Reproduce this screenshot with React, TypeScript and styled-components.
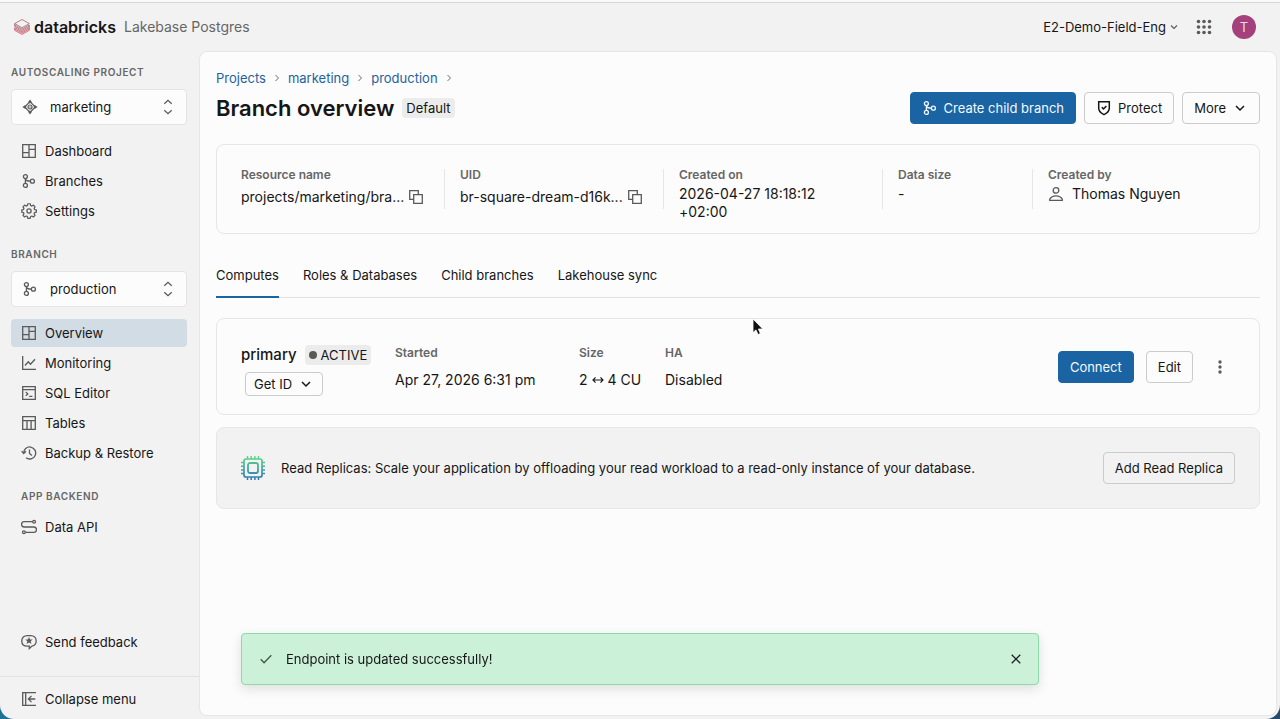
import React from 'react';
import styled, { createGlobalStyle, css } from 'styled-components';

const GlobalStyle = createGlobalStyle`
  *, *::before, *::after { box-sizing: border-box; }
  body {
    margin: 0;
    background: linear-gradient(90deg, #1f7396 0%, #274a6b 100%);
    color: #161616;
    font-family: Inter, "Liberation Sans", sans-serif;
    font-size: 13px;
    line-height: 18px;
  }
  button, select { font: inherit; color: inherit; }
  a { color: inherit; text-decoration: none; }
`;

/* ---------- icons ---------- */

const IconSvg = styled.svg<{ $size?: number }>`
  display: block;
  flex: none;
  width: ${p => p.$size ?? 16}px;
  height: ${p => p.$size ?? 16}px;
  fill: none;
  stroke: currentColor;
  stroke-width: 1.3;
`;

type IconProps = { size?: number };

const Icon = ({ size, children }: IconProps & { children: React.ReactNode }) => (
  <IconSvg viewBox="0 0 16 16" $size={size} aria-hidden="true">{children}</IconSvg>
);

const DashboardIcon = () => (
  <Icon><path d="M1.7 1.7h12.6v12.6H1.7zM8 1.7v12.6M1.7 9.7H8M8 6.3h6.3" /></Icon>
);
const BranchIcon = () => (
  <Icon>
    <circle cx="4.400" cy="3.600" r="2" />
    <circle cx="4.400" cy="12.400" r="2" />
    <circle cx="11.400" cy="8.200" r="2" />
    <path d="M4.400 5.600v4.800M4.400 6c.4 1.500 1.500 2.200 5 2.200" />
  </Icon>
);
const GearIcon = () => (
  <Icon>
    <path strokeLinejoin="round" d="M6.700 1h2.600l.4 1.900 1.300.6 1.700-1 1.700 1.800-1 1.600.5 1.300 1.900.4v2.400l-1.900.4-.5 1.300 1 1.700-1.700 1.700-1.700-1-1.300.5-.4 1.900H6.700l-.4-1.900-1.300-.5-1.700 1-1.700-1.700 1-1.700-.5-1.300L.3 10V7.600l1.800-.4.5-1.300-1-1.600 1.700-1.800 1.700 1 1.300-.6z" transform="translate(.5 -.2) scale(.94)" />
    <circle cx="8" cy="8" r="2.100" />
  </Icon>
);
const ProjectIcon = () => (
  <Icon>
    <path d="M8 2.700 13.300 8 8 13.300 2.700 8z" strokeWidth="1.200" />
    <circle cx="8" cy="8" r="2" strokeWidth="1.200" />
    <g fill="currentColor" stroke="none">
      <path d="M6 3.300 8 .6l2 2.700L8 4.400zM6 12.700l2 2.700 2-2.700-2-1.100zM3.300 6 .4 8l2.900 2 1.100-2zM12.700 6l2.900 2-2.900 2-1.100-2z" />
      <circle cx="8" cy="8" r=".7" />
    </g>
  </Icon>
);
const ChartIcon = () => (
  <Icon><path d="M1.700 1v13.300H15M4 10.500l3.300-3.700 2.200 2.400L14 4.300" /></Icon>
);
const SqlIcon = () => (
  <Icon><path d="M1.700 1.700h12.600v12.600H1.700zM1.700 4.700h12.600M4.800 7l2 1.900-2 1.900M8.200 11.300h3.200" /></Icon>
);
const TableIcon = () => (
  <Icon><path d="M1.700 1.700h12.600v12.600H1.700zM1.700 5.700h12.600M6 5.700v8.600M10.100 5.700v8.600" /></Icon>
);
const HistoryIcon = () => (
  <Icon><path d="M2.700 8.400A6 6 0 1 1 5 12.700M.6 6.100l2.100 2.400L5 6.300M8.500 4.500V8.400l2.400 2.100" /></Icon>
);
const ApiIcon = () => (
  <Icon>
    <circle cx="13.100" cy="2.700" r="1.400" />
    <circle cx="2.900" cy="13.300" r="1.400" />
    <path d="M11.700 2.700H3.200a2.650 2.650 0 0 0 0 5.300h9.600a2.650 2.650 0 0 1 0 5.300H4.300" />
  </Icon>
);
const FeedbackIcon = () => (
  <Icon>
    <path d="M8.300 12.900v2.500L11 12.900c2.600-.6 4.200-2.500 4.200-5.200 0-3.100-2.200-5.300-5.500-5.300H6.300C3 2.400.8 4.600.8 7.700s2.200 5.200 5.500 5.200z" transform="translate(0 -.8)" />
    <path fill="currentColor" stroke="none" d="m8 3 1.100 2.400 2.600.2-2 1.700.7 2.600L8 8.500 5.600 9.900l.7-2.600-2-1.700 2.600-.2z" />
  </Icon>
);
const CollapseIcon = () => (
  <Icon><path d="M15 1.700H1.700v12.600H15M4.700 1.700v12.600M14.300 8H7.600M10.500 4.900 7.400 8l3.100 3.100" /></Icon>
);
const UpDownIcon = () => (
  <Icon><path d="m4.300 4.700L8 1.300l3.700 3.400M4.300 11.300 8 14.700l3.700-3.400" /></Icon>
);
const ChevronDown = ({ size }: IconProps) => (
  <Icon size={size}><path strokeWidth="1.500" d="m4 6 4 4 4-4" /></Icon>
);
const ChevronRight = () => (
  <Icon size={12}><path d="m6 4 4 4-4 4" /></Icon>
);
const ShieldIcon = () => (
  <Icon><path strokeWidth="1.500" d="M2.700 1.700h10.600v6.500c0 2.800-2 4.800-5.300 6.400-3.300-1.600-5.300-3.600-5.300-6.400zM5.800 7.200l1.700 1.700 2.900-3" /></Icon>
);
const CopyIcon = () => (
  <Icon><path d="M5.700 10.300h-4V1.700h8.600v4M5.700 5.700h8.600v8.600H5.700z" /></Icon>
);
const UserIcon = () => (
  <Icon>
    <circle cx="8" cy="4.400" r="2.800" />
    <path d="M1.700 14.300v-1.200C3 11 5.300 9.900 8 9.900s5 1.100 6.300 3.200v1.200z" />
  </Icon>
);
const ArrowsIcon = () => (
  <Icon size={12}><path strokeWidth="1.500" d="M1.500 8h13M4.700 4.500 1.300 8l3.400 3.500M11.300 4.500l3.400 3.500-3.400 3.500" /></Icon>
);
const CheckIcon = () => (
  <Icon><path d="m2.700 8.200 3.400 3.600 7.200-7.600" /></Icon>
);
const CloseIcon = () => (
  <Icon><path d="m3.700 3.700 8.600 8.600M12.300 3.700l-8.600 8.600" /></Icon>
);
const KebabIcon = () => (
  <Icon>
    <g fill="currentColor" stroke="none">
      <circle cx="8" cy="3" r="1.700" /><circle cx="8" cy="8" r="1.700" /><circle cx="8" cy="13" r="1.700" />
    </g>
  </Icon>
);
const AppsIcon = () => (
  <Icon>
    <g fill="currentColor" stroke="none">
      {[2.500, 8, 13.500].map(y => [2.500, 8, 13.500].map(x => <circle key={`${x}-${y}`} cx={x} cy={y} r="1.800" />))}
    </g>
  </Icon>
);
const ChipIcon = () => (
  <IconSvg viewBox="0 0 24 24" $size={24} aria-hidden="true">
    <defs>
      <linearGradient id="chip" gradientUnits="userSpaceOnUse" x1="0" y1="0" x2="0" y2="24">
        <stop offset="0" stopColor="#5fdc86" />
        <stop offset="1" stopColor="#2f74b8" />
      </linearGradient>
    </defs>
    <g stroke="url(#chip)">
      <rect x="3" y="3" width="18" height="18" rx="2" strokeWidth="1.700" />
      <rect x="7" y="7" width="10" height="10" rx="2" strokeWidth="1.800" />
      <path strokeWidth="1.500" d="M6.500 0v3M10.200 0v3M13.900 0v3M17.500 0v3M6.500 21v3M10.200 21v3M13.900 21v3M17.500 21v3M0 6.500h3M0 10.200h3M0 13.900h3M0 17.500h3M21 6.500h3M21 10.200h3M21 13.900h3M21 17.500h3" />
    </g>
  </IconSvg>
);
const BrandMark = () => (
  <IconSvg viewBox="0 0 16 16" aria-hidden="true">
    <g strokeWidth=".8" strokeLinejoin="round">
      <path d="M.7 4.600 8 .5l7.300 4.100L8 8.700z" stroke="#a8606c" />
      <path d="M.7 4.600v2.700L8 11.400l7.300-4.100V6L8 10.100.7 6" stroke="#8a6a70" />
      <path d="M.7 8.600v2.700L8 15.400l7.300-4.100V9.900L8 14 .7 9.900M15.300 7.300v2.600M.7 8.600 8 12.700l7.300-4.100" stroke="#d4485c" />
    </g>
  </IconSvg>
);

/* ---------- shell ---------- */

const Window = styled.div`
  display: flex;
  flex-direction: column;
  min-height: 100vh;
  background: #f2f2f2;
  border-top: 2px solid #fafafa;
  border-radius: 0 0 14px 14px;
`;

const TopBar = styled.header`
  display: flex;
  align-items: center;
  height: 49px;
  padding: 0 24px 0 14px;
  border-top: 1px solid #d6d6d6;
`;

const Brand = styled.a`
  display: flex;
  align-items: center;
  gap: 4px;
  margin-right: 8px;
  font-size: 16px;
  font-weight: 600;
`;

const Product = styled.span`
  flex: 1;
  color: #666;
  font-size: 14px;
`;

const Workspace = styled.button`
  display: flex;
  align-items: center;
  gap: 2px;
  margin-right: 16px;
  padding: 0;
  border: 0;
  background: none;
  & > svg { color: #5a5a5a; }
`;

const BareButton = styled.button<{ $size: number }>`
  display: grid;
  place-items: center;
  flex: none;
  width: ${p => p.$size}px;
  height: ${p => p.$size}px;
  padding: 0;
  border: 0;
  background: none;
  color: #5a5a5a;
`;

const Avatar = styled(BareButton)`
  margin-left: 20px;
  border-radius: 50%;
  background: #a4407c;
  color: #f0d9e6;
`;

const Body = styled.div`
  display: flex;
  flex: 1;
  padding: 0 3px 3px 0;
`;

const Sidebar = styled.nav`
  display: flex;
  flex-direction: column;
  flex: none;
  width: 199px;
  padding-top: 11px;
  margin-bottom: -3px;
`;

const SideSection = styled.section`
  padding: 0 12px 17px 11px;
`;

const SideLabel = styled.h2<{ $indent?: boolean }>`
  margin: 0 0 7px;
  padding-left: ${p => (p.$indent ? 10 : 0)}px;
  color: #666;
  font-size: 10px;
  font-weight: 600;
  line-height: 20px;
  letter-spacing: .06em;
  text-transform: uppercase;
`;

const PickerBox = styled.div`
  display: grid;
  grid-template-columns: 16px 1fr 16px;
  align-items: center;
  height: 36px;
  margin-bottom: 12px;
  padding: 0 10px;
  border: 1px solid #e4e4e4;
  border-radius: 4px;
  background: #fcfcfc;
  color: #5a5a5a;
  & > svg { grid-row: 1; grid-column: 1; pointer-events: none; }
  & > svg:last-child { grid-column: 3; }
`;

const PickerSelect = styled.select`
  grid-row: 1;
  grid-column: 1 / -1;
  height: 34px;
  padding: 0 24px 0 28px;
  border: 0;
  background: none;
  color: #161616;
  appearance: none;
`;

const NavLink = styled.a<{ $active?: boolean }>`
  display: flex;
  align-items: center;
  gap: 8px;
  height: 28px;
  margin-bottom: 2px;
  padding: 0 10px;
  border-radius: 4px;
  background: ${p => (p.$active ? '#d1dce4' : 'transparent')};
  & > svg { color: #5a5a5a; }
`;

const SideFoot = styled.div<{ $line?: boolean }>`
  padding: 8px 12px 4px 11px;
  ${p => (p.$line ? css`border-top: 1px solid #e2e2e2;` : css`margin-top: auto; padding-bottom: 18px;`)}
`;

const Main = styled.main`
  flex: 1;
  min-width: 0;
  padding: 16px;
  border: 1px solid #e6e6e6;
  border-radius: 8px;
  background: #fcfcfc;
`;

/* ---------- page header ---------- */

const Crumbs = styled.nav`
  display: flex;
  align-items: center;
  gap: 5px;
  color: #666;
  line-height: 20px;
  & > a { color: #1f639c; }
`;

const TitleRow = styled.div`
  display: flex;
  align-items: center;
  gap: 8px;
  margin: 4px 0 20px;
`;

const Title = styled.h1`
  margin: 0;
  font-size: 22px;
  font-weight: 600;
  line-height: 28px;
`;

const Tag = styled.span`
  display: flex;
  align-items: center;
  gap: 4px;
  height: 20px;
  padding: 0 4px;
  border-radius: 4px;
  background: #ececec;
`;

const Dot = styled.span`
  width: 8px;
  height: 8px;
  border-radius: 50%;
  background: #5a5a55;
`;

const Actions = styled.div<{ $gap: number }>`
  display: flex;
  align-items: center;
  gap: ${p => p.$gap}px;
  margin-left: auto;
`;

const Button = styled.button<{ $primary?: boolean; $small?: boolean }>`
  display: flex;
  align-items: center;
  gap: 6px;
  flex: none;
  height: ${p => (p.$small ? 24 : 32)}px;
  padding: 0 ${p => (p.$small ? 8 : 11)}px;
  border: 1px solid ${p => (p.$primary ? '#1b64a4' : '#cbcbcb')};
  border-radius: 4px;
  background: ${p => (p.$primary ? '#1b64a4' : 'transparent')};
  color: ${p => (p.$primary ? '#f4f8fb' : '#161616')};
  white-space: nowrap;
`;

/* ---------- cards ---------- */

const Card = styled.section<{ $muted?: boolean }>`
  display: flex;
  align-items: center;
  padding: 24px;
  border: 1px solid #e6e6e6;
  border-radius: 8px;
  background: ${p => (p.$muted ? '#f2f2f2' : 'transparent')};
`;

const Facts = styled(Card)`
  display: grid;
  grid-template-columns: 203fr 219fr 219fr 150fr 203fr;
  align-items: start;
  padding-bottom: 12px;
`;

const Fact = styled.div`
  min-width: 0;
  & + & {
    min-height: 40px;
    padding-left: 16px;
    background: linear-gradient(#e6e6e6, #e6e6e6) left top / 1px 40px no-repeat;
  }
`;

const Label = styled.div`
  margin-bottom: 4px;
  color: #666;
  font-size: 12px;
  font-weight: 600;
  line-height: 12px;
`;

const Value = styled.div`
  display: flex;
  align-items: center;
  gap: 8px;
  font-size: 14px;
  & > svg { color: #5a5a5a; }
`;

const CopyValue = styled(Value)`
  gap: 0;
  white-space: nowrap;
`;

const DateValue = styled(Value)`
  max-width: 150px;
`;

const Tabs = styled.div`
  display: flex;
  gap: 24px;
  margin: 20px 0;
  border-bottom: 1px solid #e2e2e2;
`;

const Tab = styled.button<{ $active?: boolean }>`
  height: 44px;
  margin-bottom: -1px;
  padding: 0;
  border: 0;
  border-bottom: 2px solid ${p => (p.$active ? '#1b64a4' : 'transparent')};
  background: none;
`;

const Compute = styled(Card)`
  margin-bottom: 12px;
  padding-top: 18px;
  padding-bottom: 18px;
`;

const Identity = styled.div`
  width: 154px;
  padding-top: 6px;
`;

const NameRow = styled.div`
  display: flex;
  align-items: center;
  gap: 8px;
  margin-bottom: 5px;
`;

const Name = styled.h3`
  margin: 0;
  font-size: 15px;
  font-weight: 500;
  line-height: 24px;
`;

const Indent = styled.div`
  display: flex;
  padding-left: 4px;
`;

const Spec = styled.div<{ $width: number }>`
  display: grid;
  align-self: flex-start;
  gap: 8px;
  width: ${p => p.$width}px;
  padding-top: 10px;
`;

const SpecValue = styled(Value)`
  gap: 4px;
  & > svg { color: inherit; }
`;

const Note = styled.p`
  margin: 0 16px;
`;

/* ---------- overlays ---------- */

const Toast = styled.div`
  position: fixed;
  bottom: 34px;
  left: 50%;
  display: flex;
  align-items: center;
  gap: 12px;
  width: min(798px, 90vw);
  height: 52px;
  padding: 0 14px 0 16px;
  border: 1px solid #8bdaa8;
  border-radius: 4px;
  background: #cbf1d8;
  box-shadow: 0 4px 12px rgba(0, 0, 0, .12);
  transform: translateX(-50%);
  & > svg { color: #3d5a47; }
  & > span { flex: 1; }
`;

const ToastClose = styled(BareButton)`
  color: #222;
`;

const Pointer = styled.svg`
  position: fixed;
  top: 318px;
  left: 752px;
  width: 12px;
  height: 18px;
  pointer-events: none;
`;

type NavItem = { label: string; icon: React.ReactNode; active?: boolean };

const projectNav: NavItem[] = [
  { label: 'Dashboard', icon: <DashboardIcon /> },
  { label: 'Branches', icon: <BranchIcon /> },
  { label: 'Settings', icon: <GearIcon /> },
];
const branchNav: NavItem[] = [
  { label: 'Overview', icon: <DashboardIcon />, active: true },
  { label: 'Monitoring', icon: <ChartIcon /> },
  { label: 'SQL Editor', icon: <SqlIcon /> },
  { label: 'Tables', icon: <TableIcon /> },
  { label: 'Backup & Restore', icon: <HistoryIcon /> },
];

const NavList = ({ items }: { items: NavItem[] }) => (
  <>
    {items.map(item => (
      <NavLink key={item.label} href="#" $active={item.active} aria-current={item.active ? 'page' : undefined}>
        {item.icon}{item.label}
      </NavLink>
    ))}
  </>
);

const Picker = ({ id, label, value, icon }: { id: string; label: string; value: string; icon: React.ReactNode }) => (
  <>
    <SideLabel><label htmlFor={id}>{label}</label></SideLabel>
    <PickerBox>
      {icon}
      <PickerSelect id={id} defaultValue={value}><option>{value}</option></PickerSelect>
      <UpDownIcon />
    </PickerBox>
  </>
);

export default function App() {
  return (
    <>
      <GlobalStyle />
      <Window>
        <TopBar>
          <Brand href="#"><BrandMark />databricks</Brand>
          <Product>Lakebase Postgres</Product>
          <Workspace type="button" aria-haspopup="menu">E2-Demo-Field-Eng<ChevronDown size={12} /></Workspace>
          <BareButton type="button" $size={16} aria-label="Apps"><AppsIcon /></BareButton>
          <Avatar type="button" $size={24}>T</Avatar>
        </TopBar>
        <Body>
          <Sidebar>
            <SideSection>
              <Picker id="project" label="Autoscaling project" value="marketing" icon={<ProjectIcon />} />
              <NavList items={projectNav} />
            </SideSection>
            <SideSection>
              <Picker id="branch" label="Branch" value="production" icon={<BranchIcon />} />
              <NavList items={branchNav} />
            </SideSection>
            <SideSection>
              <SideLabel $indent>App backend</SideLabel>
              <NavLink href="#"><ApiIcon />Data API</NavLink>
            </SideSection>
            <SideFoot><NavLink href="#"><FeedbackIcon />Send feedback</NavLink></SideFoot>
            <SideFoot $line><NavLink href="#"><CollapseIcon />Collapse menu</NavLink></SideFoot>
          </Sidebar>
          <Main>
            <Crumbs aria-label="Breadcrumb">
              <a href="#">Projects</a><ChevronRight />
              <a href="#">marketing</a><ChevronRight />
              <a href="#">production</a><ChevronRight />
            </Crumbs>
            <TitleRow>
              <Title>Branch overview</Title>
              <Tag>Default</Tag>
              <Actions $gap={8}>
                <Button type="button" $primary><BranchIcon />Create child branch</Button>
                <Button type="button"><ShieldIcon />Protect</Button>
                <Button type="button">More<ChevronDown /></Button>
              </Actions>
            </TitleRow>
            <Facts>
              <Fact>
                <Label>Resource name</Label>
                <CopyValue>
                  projects/marketing/bra...
                  <BareButton type="button" $size={24} aria-label="Copy resource name"><CopyIcon /></BareButton>
                </CopyValue>
              </Fact>
              <Fact>
                <Label>UID</Label>
                <CopyValue>
                  br-square-dream-d16k...
                  <BareButton type="button" $size={24} aria-label="Copy UID"><CopyIcon /></BareButton>
                </CopyValue>
              </Fact>
              <Fact>
                <Label>Created on</Label>
                <DateValue>2026-04-27 18:18:12 +02:00</DateValue>
              </Fact>
              <Fact>
                <Label>Data size</Label>
                <Value>-</Value>
              </Fact>
              <Fact>
                <Label>Created by</Label>
                <Value><UserIcon />Thomas Nguyen</Value>
              </Fact>
            </Facts>
            <Tabs role="tablist">
              <Tab type="button" role="tab" aria-selected="true" $active>Computes</Tab>
              <Tab type="button" role="tab">Roles &amp; Databases</Tab>
              <Tab type="button" role="tab">Child branches</Tab>
              <Tab type="button" role="tab">Lakehouse sync</Tab>
            </Tabs>
            <Compute>
              <Identity>
                <NameRow><Name>primary</Name><Tag><Dot />ACTIVE</Tag></NameRow>
                <Indent><Button type="button" $small>Get ID<ChevronDown /></Button></Indent>
              </Identity>
              <Spec $width={184}><Label>Started</Label><SpecValue>Apr 27, 2026 6:31 pm</SpecValue></Spec>
              <Spec $width={86}><Label>Size</Label><SpecValue>2 <ArrowsIcon /> 4 CU</SpecValue></Spec>
              <Spec $width={86}><Label>HA</Label><SpecValue>Disabled</SpecValue></Spec>
              <Actions $gap={12}>
                <Button type="button" $primary>Connect</Button>
                <Button type="button">Edit</Button>
                <BareButton type="button" $size={30} aria-label="More actions"><KebabIcon /></BareButton>
              </Actions>
            </Compute>
            <Card $muted>
              <ChipIcon />
              <Note>Read Replicas: Scale your application by offloading your read workload to a read-only instance of your database.</Note>
              <Actions $gap={8}><Button type="button">Add Read Replica</Button></Actions>
            </Card>
          </Main>
        </Body>
      </Window>
      <Toast role="status">
        <CheckIcon />
        <span>Endpoint is updated successfully!</span>
        <ToastClose type="button" $size={16} aria-label="Close"><CloseIcon /></ToastClose>
      </Toast>
      <Pointer viewBox="0 0 12 18" aria-hidden="true">
        <path d="M1 1v13.500l3-2.600 2 4.600 2.400-1-2-4.500h4.400z" fill="#111" stroke="#fff" strokeWidth=".8" />
      </Pointer>
    </>
  );
}
